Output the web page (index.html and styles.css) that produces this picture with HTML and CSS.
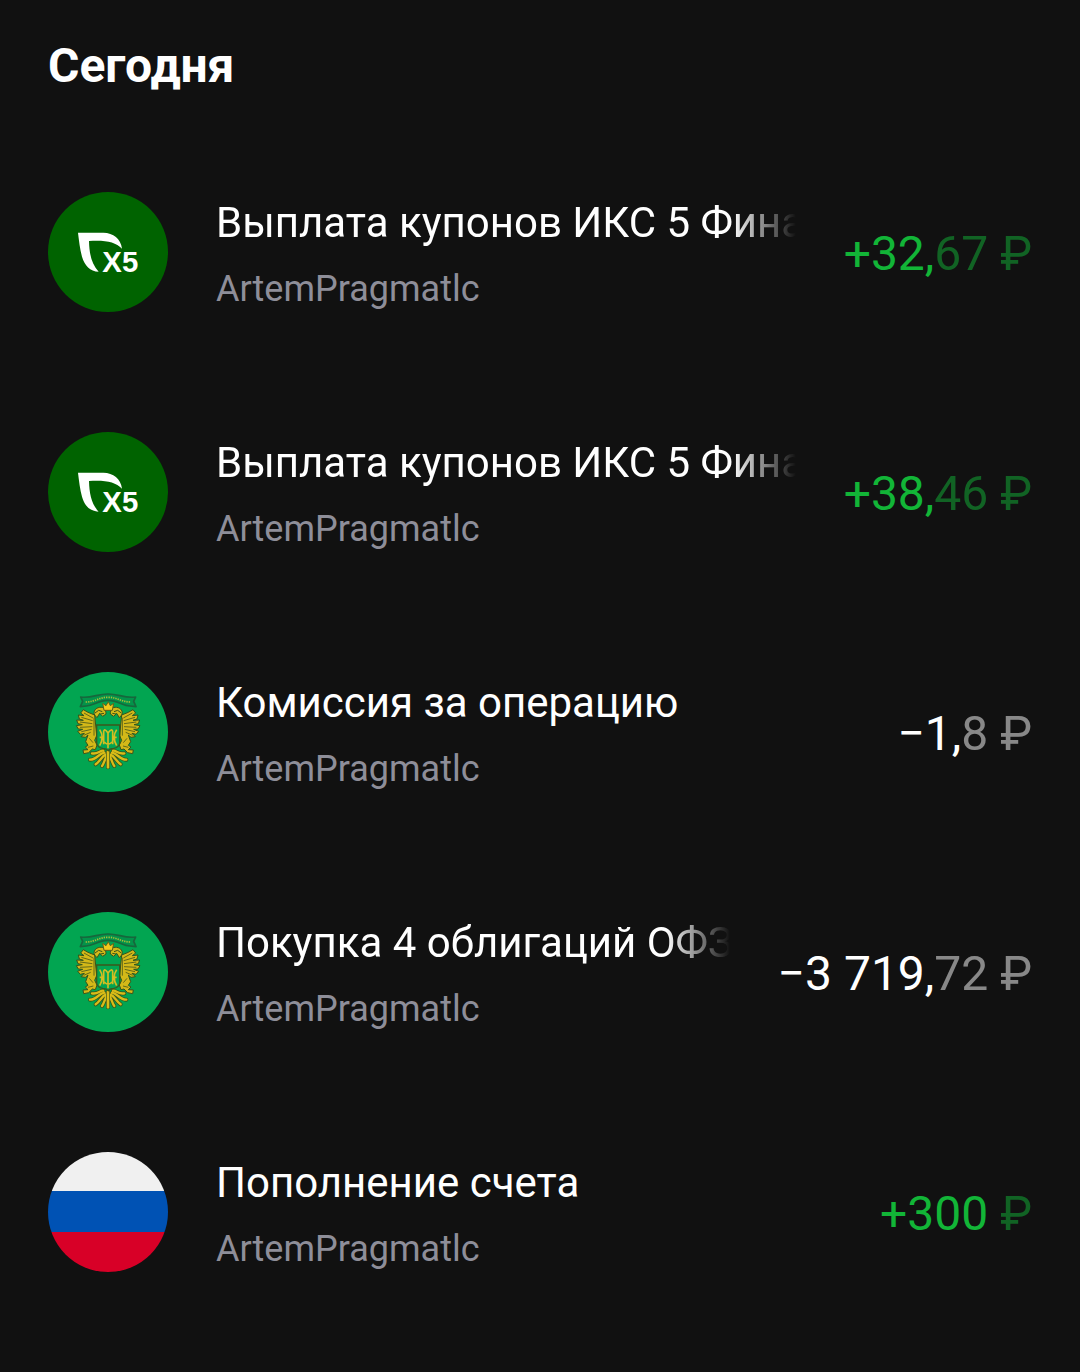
FILE: index.html
```html
<!doctype html>
<html lang="ru">

<head>
	<meta charset="utf-8">
	<meta name="viewport" content="width=device-width, initial-scale=1">
	<title>Операции</title>
	<link rel="stylesheet" href="styles.css">
</head>

<body>
	<!-- shared logos -->
	<svg class="sprite" aria-hidden="true">
		<symbol id="x5" viewBox="24 34 360 360">
			<circle cx="204" cy="214" r="180" fill="#006300" />
			<path fill="#fff" d="M114 156H190C220 157 242 173 246 204C226 184 198 178 147 181C148 218 154 250 176 273C150 272 134 255 126 228C120 207 117 180 114 156Z" />
			<text class="logo-text" x="187" y="275">X5</text>
		</symbol>
		<symbol id="wing" viewBox="0 0 144 300" overflow="visible">
			<path fill="#d3b818" stroke="#37531b" stroke-width="3" stroke-linejoin="round" d="M104 104L84 96L70 88L62 98L72 106L55 104L58 116L70 120L50 119L54 130L67 133L49 136L55 146L68 147L53 153L61 162L73 159L63 169L76 171L84 164L77 184L84 195L76 200L84 208L69 209L71 220L86 217L97 206L106 208L111 194L104 180L110 166Z" />
			<path fill="none" stroke="#62691a" stroke-width="3" d="M99 113L72 98M98 121L64 111M97 130L60 125M97 139L60 141M95 147L64 154M92 156L71 165M88 174L99 187M84 201L100 197M102 112V166" />
			<path fill="#d3b818" stroke="#37531b" stroke-width="3" d="M104 104C99 93 106 83 119 81C132 79 138 88 138 101L128 108L119 99L111 112Z" />
			<path fill="none" stroke="#37531b" stroke-width="3" d="M105 98L116 90L127 94M121 101L132 99" />
			<path fill="none" stroke="#37531b" stroke-width="12" stroke-linecap="round" d="M130 211C119 210 113 223 96 219M133 217C117 219 109 239 90 238M137 223C125 228 120 243 107 252M141 226C134 235 133 248 126 257" />
			<path fill="none" stroke="#d9bc18" stroke-width="7" stroke-linecap="round" d="M130 211C119 210 113 223 96 219M133 217C117 219 109 239 90 238M137 223C125 228 120 243 107 252M141 226C134 235 133 248 126 257" />
		</symbol>
		<symbol id="minfin" viewBox="-36 -25 360 360">
			<circle cx="144" cy="155" r="180" fill="#02a551" />
			<use href="#wing" width="144" height="300" />
			<use href="#wing" width="144" height="300" transform="translate(289) scale(-1 1)" />
			<path fill="none" stroke="#37531b" stroke-width="12" stroke-linecap="round" d="M144 214V261" />
			<path fill="none" stroke="#d9bc18" stroke-width="8" stroke-linecap="round" d="M144 214V261" />
			<path fill="#02a551" stroke="#3d571b" stroke-width="4" d="M110 134H179V188Q177 202 161 204Q149 205 145 211Q140 205 128 204Q112 202 110 188Z" />
			<path fill="none" stroke="#d3bd22" stroke-width="5" d="M144 156V204M119 148Q134 171 119 196M170 148Q155 171 170 196M131 192V154Q133 142 144 158Q156 142 158 154V192M119 171H131M158 171H170M133 185Q144 198 156 185" />
			<path fill="#f0c91d" stroke="#665e17" stroke-width="3" stroke-linejoin="round" d="M132 90L128 69L138 76L145 64L151 76L161 69L157 90Z" />
			<path fill="#03934a" stroke="#17673c" stroke-width="5" stroke-linejoin="round" d="M62 50C94 55 114 40 144 41C174 40 194 55 227 50L221 63L228 79L210 77C187 76 174 60 144 60C114 60 101 76 79 77L61 79L68 63Z" />
			<path fill="none" stroke="#a9bd38" stroke-width="5" stroke-dasharray="4 3" d="M77 65C105 65 119 50 144 51C170 50 184 65 212 65" />
		</symbol>
		<symbol id="rub" viewBox="0 0 120 120">
			<clipPath id="round">
				<circle cx="60" cy="60" r="60" />
			</clipPath>
			<g clip-path="url(#round)">
				<path fill="#f0f0f0" d="M0 0H120V39H0Z" />
				<path fill="#0052b4" d="M0 39H120V80H0Z" />
				<path fill="#d80027" d="M0 80H120V120H0Z" />
			</g>
		</symbol>
	</svg>

	<main class="feed">
		<h1 class="day">Сегодня</h1>
		<ul class="operations">
			<li class="operation">
				<svg class="logo" aria-hidden="true"><use href="#x5" /></svg>
				<div class="info">
					<div class="title fade">Выплата купонов ИКС 5 Фина</div>
					<div class="account">ArtemPragmatlc</div>
				</div>
				<div class="amount income">+32,<span class="minor">67 ₽</span></div>
			</li>
			<li class="operation">
				<svg class="logo" aria-hidden="true"><use href="#x5" /></svg>
				<div class="info">
					<div class="title fade">Выплата купонов ИКС 5 Фина</div>
					<div class="account">ArtemPragmatlc</div>
				</div>
				<div class="amount income">+38,<span class="minor">46 ₽</span></div>
			</li>
			<li class="operation">
				<svg class="logo" aria-hidden="true"><use href="#minfin" /></svg>
				<div class="info">
					<div class="title">Комиссия за операцию</div>
					<div class="account">ArtemPragmatlc</div>
				</div>
				<div class="amount">−1,<span class="minor">8 ₽</span></div>
			</li>
			<li class="operation">
				<svg class="logo" aria-hidden="true"><use href="#minfin" /></svg>
				<div class="info">
					<div class="title fade">Покупка 4 облигаций ОФЗ</div>
					<div class="account">ArtemPragmatlc</div>
				</div>
				<div class="amount">−3 719,<span class="minor">72 ₽</span></div>
			</li>
			<li class="operation">
				<svg class="logo" aria-hidden="true"><use href="#rub" /></svg>
				<div class="info">
					<div class="title">Пополнение счета</div>
					<div class="account">ArtemPragmatlc</div>
				</div>
				<div class="amount income">+300 <span class="minor">₽</span></div>
			</li>
		</ul>
	</main>
</body>

</html>
```
FILE: styles.css
```css
body {
	margin: 0;
	background: #111;
	color: #fff;
	font-family: Roboto, sans-serif;
}

.sprite {
	display: block;
	width: 0;
	height: 0;
}

.feed {
	padding: 36px 48px 40px;
}

.day {
	margin: 0;
	font-size: 48px;
	line-height: 60px;
	font-weight: 700;
}

.operations {
	list-style: none;
	margin: 36px 0 0;
	padding: 0;
}

.operation {
	display: flex;
	align-items: center;
	padding: 60px 0;
}

.logo {
	flex: none;
	width: 120px;
	height: 120px;
	margin-right: 48px;
}

.logo-text {
	font-family: "Liberation Sans", Arial, sans-serif;
	font-size: 88px;
	font-weight: 700;
	fill: #fff;
}

.info {
	flex: 1;
	min-width: 0;
}

.title {
	font-size: 42px;
	line-height: 62px;
	white-space: nowrap;
	overflow: hidden;
}

.fade {
	-webkit-mask-image: linear-gradient(to left, transparent, #000 64px);
	mask-image: linear-gradient(to left, transparent, #000 64px);
}

.account {
	margin-top: 12px;
	font-size: 36px;
	line-height: 46px;
	color: #8e8e99;
}

.amount {
	flex: none;
	margin-left: 48px;
	padding-top: 4px;
	font-size: 48px;
	line-height: 60px;
	white-space: nowrap;
}

.income {
	color: #12b537;
}

.minor {
	opacity: .5;
}
```
